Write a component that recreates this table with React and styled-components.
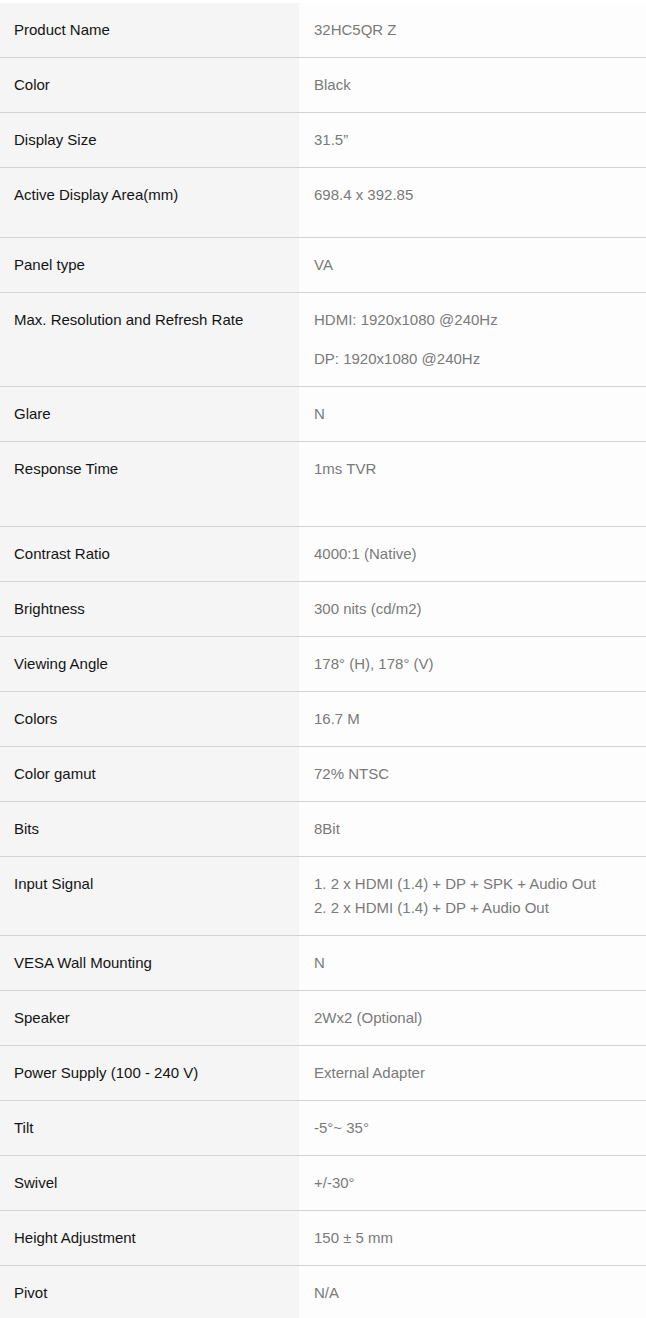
import React from "react";
import styled, { createGlobalStyle } from "styled-components";

const GlobalStyle = createGlobalStyle`
  html, body {
    margin: 0;
    padding: 0;
    background: #ffffff;
  }
  body {
    font-family: "Liberation Sans", Arial, sans-serif;
    font-size: 15px;
  }
`;

const SpecTable = styled.div`
  width: 646px;
  margin-top: 3px;
  display: flex;
  flex-direction: column;
`;

const Row = styled.div`
  display: grid;
  grid-template-columns: 299px 1fr;
  border-bottom: 1px solid #d3d3d3;
`;

const Label = styled.div`
  background: #f5f5f5;
  color: #141414;
  padding: 15px 14px;
  line-height: 24px;
`;

const Value = styled.div`
  background: #fdfdfd;
  color: #7a7a7a;
  padding: 15px 15px ${(p) => 15 + (p.$extra || 0)}px;
  line-height: 24px;
  display: flex;
  flex-direction: column;
  gap: ${(p) => p.$gap || 0}px;
`;

const Line = styled.span`
  display: block;
`;

const specs = [
  { label: "Product Name", values: ["32HC5QR Z"] },
  { label: "Color", values: ["Black"] },
  { label: "Display Size", values: ["31.5\u201D"] },
  { label: "Active Display Area(mm)", values: ["698.4 x 392.85"], extra: 15 },
  { label: "Panel type", values: ["VA"] },
  {
    label: "Max. Resolution and Refresh Rate",
    values: ["HDMI: 1920x1080 @240Hz", "DP: 1920x1080 @240Hz"],
    gap: 15,
  },
  { label: "Glare", values: ["N"] },
  { label: "Response Time", values: ["1ms TVR"], extra: 30 },
  { label: "Contrast Ratio", values: ["4000:1 (Native)"] },
  { label: "Brightness", values: ["300 nits (cd/m2)"] },
  { label: "Viewing Angle", values: ["178\u00B0 (H), 178\u00B0 (V)"] },
  { label: "Colors", values: ["16.7 M"] },
  { label: "Color gamut", values: ["72% NTSC"] },
  { label: "Bits", values: ["8Bit"] },
  {
    label: "Input Signal",
    values: [
      "1. 2 x HDMI (1.4) + DP + SPK + Audio Out",
      "2. 2 x HDMI (1.4) + DP + Audio Out",
    ],
  },
  { label: "VESA Wall Mounting", values: ["N"] },
  { label: "Speaker", values: ["2Wx2 (Optional)"] },
  { label: "Power Supply (100 - 240 V)", values: ["External Adapter"] },
  { label: "Tilt", values: ["-5\u00B0~ 35\u00B0"] },
  { label: "Swivel", values: ["+/-30\u00B0"] },
  { label: "Height Adjustment", values: ["150 \u00B1 5 mm"] },
  { label: "Pivot", values: ["N/A"] },
];

export default function App() {
  return (
    <>
      <GlobalStyle />
      <SpecTable>
        {specs.map((s) => (
          <Row key={s.label}>
            <Label>{s.label}</Label>
            <Value $extra={s.extra} $gap={s.gap}>
              {s.values.map((v) => (
                <Line key={v}>{v}</Line>
              ))}
            </Value>
          </Row>
        ))}
      </SpecTable>
    </>
  );
}
